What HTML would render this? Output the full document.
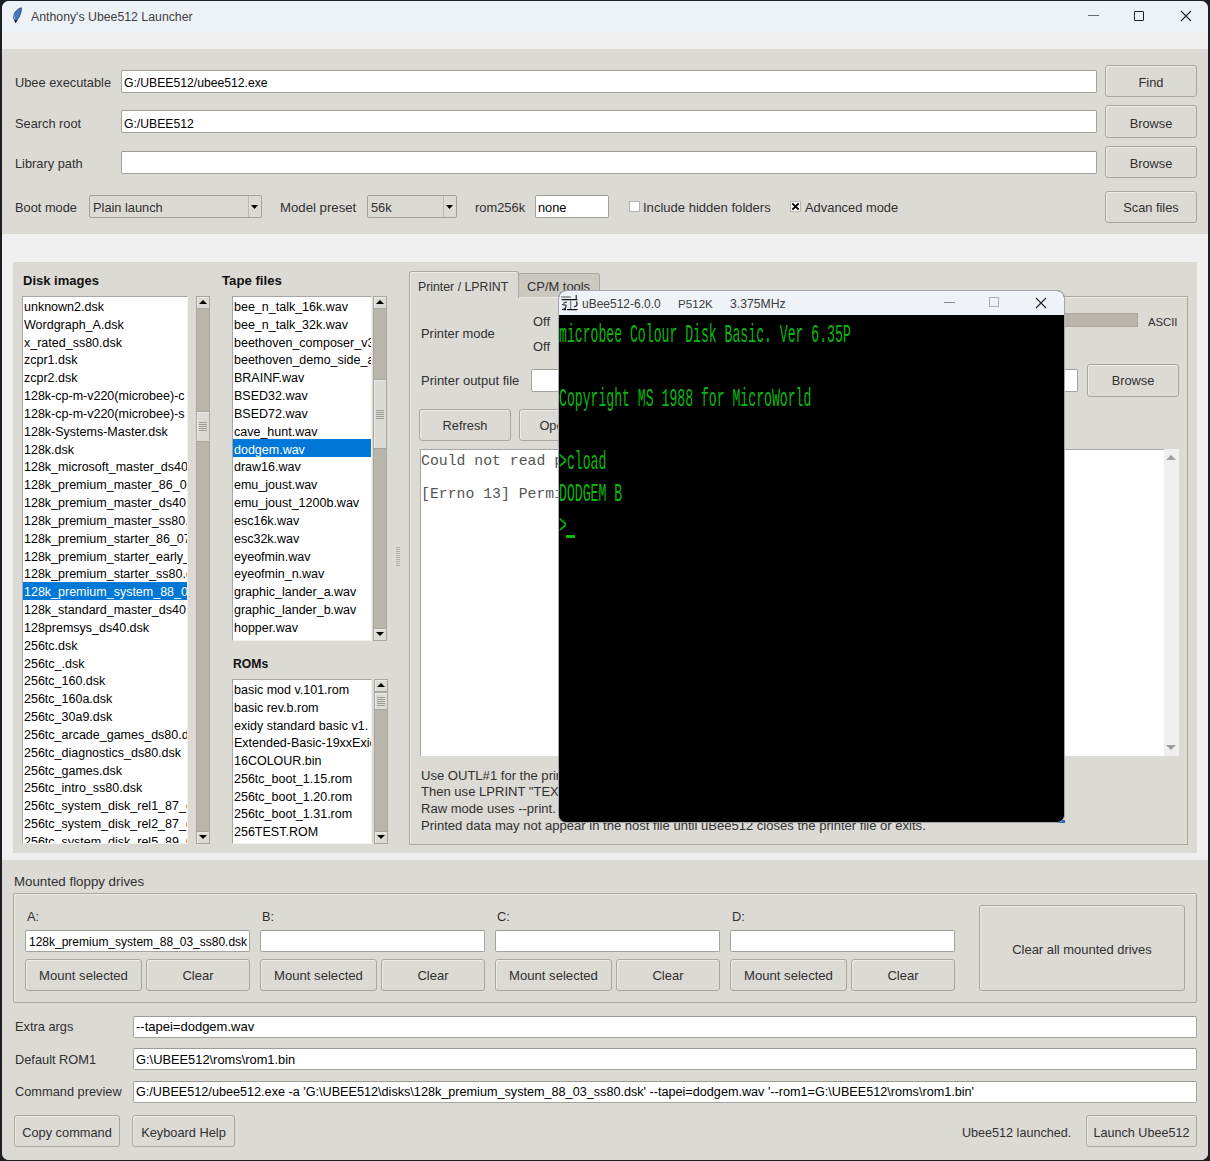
<!DOCTYPE html><html><head><meta charset="utf-8"><style>
html,body{margin:0;padding:0;}
body{width:1210px;height:1161px;overflow:hidden;background:#1e1f22;position:relative;font-family:"Liberation Sans",sans-serif;color:#303030;}
.a{position:absolute;}
.t{position:absolute;line-height:1;white-space:pre;}
</style></head><body>
<div class="a" style="left:2px;top:1px;width:1206px;height:1159px;background:#dcdad5;border-radius:7px;"></div>
<div class="a" style="left:2px;top:1px;width:1206px;height:31px;background:#edf2f7;border-radius:7px 7px 0 0;"></div>
<div class="a" style="left:2px;top:32px;width:1206px;height:17px;background:#f0f0f0;"></div>
<div class="a" style="left:2px;top:49px;width:1206px;height:185px;background:#dcdad5;"></div>
<div class="a" style="left:2px;top:234px;width:1206px;height:626px;background:#f0f0f0;"></div>
<div class="a" style="left:13px;top:262px;width:1184px;height:591px;background:#dcdad5;"></div>
<div class="a" style="left:2px;top:860px;width:1206px;height:300px;background:#dcdad5;border-radius:0 0 7px 7px;"></div>
<svg class="a" style="left:12px;top:6px" width="12" height="18" viewBox="0 0 12 18"><path d="M9.3 1.8 C 6 2.3, 1.6 6.5, 1.4 11.5 L 3.6 16.8 L 5.2 14 C 7.6 10.8, 9.8 6, 9.3 1.8 Z" fill="#4a78bd" stroke="#1e3a6e" stroke-width="0.8"/><path d="M1.8 8 C 1.6 10, 1.8 12, 3.2 14" stroke="#8fa6c8" stroke-width="1.2" fill="none"/><path d="M2.5 13.5 L 3.6 16.8 L 5 14.2 Z" fill="#111"/></svg>
<div class="t" style="left:31px;top:11px;font-size:12.3px;color:#404040;">Anthony's Ubee512 Launcher</div>
<div class="a" style="left:1088px;top:15px;width:11px;height:1px;background:#6a6a6a;"></div>
<div class="a" style="left:1134px;top:11px;width:10px;height:10px;border:1px solid #222;box-sizing:border-box;border-radius:1px;"></div>
<svg class="a" style="left:1180px;top:10px" width="12" height="12" viewBox="0 0 12 12"><path d="M1 1 L11 11 M11 1 L1 11" stroke="#222" stroke-width="1.1"/></svg>
<div class="t" style="left:15px;top:77px;font-size:12.8px;">Ubee executable</div>
<div class="a" style="left:121px;top:70px;width:976px;height:23px;background:#fff;border:1px solid #a4a29c;border-top-color:#9c9a94;border-radius:2px;box-sizing:border-box;"></div>
<div class="t" style="left:124px;top:77px;font-size:12.2px;color:#000;">G:/UBEE512/ubee512.exe</div>
<div class="a" style="left:1105px;top:65px;width:92px;height:32px;background:#dcdad5;border:1px solid #a9a69f;border-radius:3px;box-sizing:border-box;box-shadow:inset 1px 1px 0 #eeebe7;"></div>
<div class="t" style="left:1105px;width:92px;text-align:center;top:77px;font-size:12.8px;">Find</div>
<div class="t" style="left:15px;top:118px;font-size:12.8px;">Search root</div>
<div class="a" style="left:121px;top:110px;width:976px;height:23px;background:#fff;border:1px solid #a4a29c;border-top-color:#9c9a94;border-radius:2px;box-sizing:border-box;"></div>
<div class="t" style="left:124px;top:118px;font-size:12.2px;color:#000;">G:/UBEE512</div>
<div class="a" style="left:1105px;top:105px;width:92px;height:33px;background:#dcdad5;border:1px solid #a9a69f;border-radius:3px;box-sizing:border-box;box-shadow:inset 1px 1px 0 #eeebe7;"></div>
<div class="t" style="left:1105px;width:92px;text-align:center;top:118px;font-size:12.8px;">Browse</div>
<div class="t" style="left:15px;top:158px;font-size:12.8px;">Library path</div>
<div class="a" style="left:121px;top:151px;width:976px;height:23px;background:#fff;border:1px solid #a4a29c;border-top-color:#9c9a94;border-radius:2px;box-sizing:border-box;"></div>
<div class="a" style="left:1105px;top:146px;width:92px;height:32px;background:#dcdad5;border:1px solid #a9a69f;border-radius:3px;box-sizing:border-box;box-shadow:inset 1px 1px 0 #eeebe7;"></div>
<div class="t" style="left:1105px;width:92px;text-align:center;top:158px;font-size:12.8px;">Browse</div>
<div class="t" style="left:15px;top:202px;font-size:12.8px;">Boot mode</div>
<div class="a" style="left:89px;top:195px;width:173px;height:23px;background:#dcdad5;border:1px solid #a4a29c;border-radius:2px;box-sizing:border-box;"></div>
<div class="a" style="left:248px;top:196px;width:1px;height:21px;background:#bcb9b1;"></div>
<svg class="a" style="left:251px;top:205px" width="7" height="4" viewBox="0 0 7 4"><polygon points="0,0 7,0 3.5,4" fill="#000"/></svg>
<div class="t" style="left:93px;top:202px;font-size:12.8px;">Plain launch</div>
<div class="t" style="left:280px;top:201px;font-size:13.2px;">Model preset</div>
<div class="a" style="left:367px;top:195px;width:90px;height:23px;background:#dcdad5;border:1px solid #a4a29c;border-radius:2px;box-sizing:border-box;"></div>
<div class="a" style="left:443px;top:196px;width:1px;height:21px;background:#bcb9b1;"></div>
<svg class="a" style="left:446px;top:205px" width="7" height="4" viewBox="0 0 7 4"><polygon points="0,0 7,0 3.5,4" fill="#000"/></svg>
<div class="t" style="left:371px;top:202px;font-size:12.8px;">56k</div>
<div class="t" style="left:475px;top:202px;font-size:12.9px;">rom256k</div>
<div class="a" style="left:535px;top:195px;width:74px;height:23px;background:#fff;border:1px solid #a4a29c;border-top-color:#9c9a94;border-radius:2px;box-sizing:border-box;"></div>
<div class="t" style="left:538px;top:202px;font-size:12.8px;color:#000;">none</div>
<div class="a" style="left:629px;top:201px;width:11px;height:11px;background:#fff;border:1px solid #b3b3b3;box-sizing:border-box;"></div>
<div class="t" style="left:643px;top:201px;font-size:13.05px;">Include hidden folders</div>
<div class="a" style="left:790px;top:201px;width:11px;height:11px;background:#fff;border:1px solid #b3b3b3;box-sizing:border-box;"></div>
<svg class="a" style="left:790px;top:201px" width="11" height="11" viewBox="0 0 11 11"><path d="M2.3 2.3 L8.7 8.7 M8.7 2.3 L2.3 8.7" stroke="#000" stroke-width="1.9"/></svg>
<div class="t" style="left:805px;top:202px;font-size:12.9px;">Advanced mode</div>
<div class="a" style="left:1105px;top:191px;width:92px;height:32px;background:#dcdad5;border:1px solid #a9a69f;border-radius:3px;box-sizing:border-box;box-shadow:inset 1px 1px 0 #eeebe7;"></div>
<div class="t" style="left:1105px;width:92px;text-align:center;top:202px;font-size:12.8px;">Scan files</div>
<div class="t" style="left:23px;top:274px;font-size:13px;font-weight:bold;color:#111;">Disk images</div>
<div class="a" style="left:22px;top:296px;width:166px;height:548px;background:#fff;border:1px solid #f2f1ee;border-top-color:#a6a6a6;border-left-color:#a6a6a6;box-sizing:border-box;overflow:hidden;">
<div class="a" style="left:0;top:285px;width:164px;height:18px;background:#0078d7;"></div>
<div class="t" style="left:1px;top:4px;font-size:12.5px;color:#000;">unknown2.dsk</div>
<div class="t" style="left:1px;top:22px;font-size:12.5px;color:#000;">Wordgraph_A.dsk</div>
<div class="t" style="left:1px;top:40px;font-size:12.5px;color:#000;">x_rated_ss80.dsk</div>
<div class="t" style="left:1px;top:57px;font-size:12.5px;color:#000;">zcpr1.dsk</div>
<div class="t" style="left:1px;top:75px;font-size:12.5px;color:#000;">zcpr2.dsk</div>
<div class="t" style="left:1px;top:93px;font-size:12.5px;color:#000;">128k-cp-m-v220(microbee)-c</div>
<div class="t" style="left:1px;top:111px;font-size:12.5px;color:#000;">128k-cp-m-v220(microbee)-s</div>
<div class="t" style="left:1px;top:129px;font-size:12.5px;color:#000;">128k-Systems-Master.dsk</div>
<div class="t" style="left:1px;top:147px;font-size:12.5px;color:#000;">128k.dsk</div>
<div class="t" style="left:1px;top:164px;font-size:12.5px;color:#000;">128k_microsoft_master_ds40</div>
<div class="t" style="left:1px;top:182px;font-size:12.5px;color:#000;">128k_premium_master_86_07</div>
<div class="t" style="left:1px;top:200px;font-size:12.5px;color:#000;">128k_premium_master_ds40.</div>
<div class="t" style="left:1px;top:218px;font-size:12.5px;color:#000;">128k_premium_master_ss80.d</div>
<div class="t" style="left:1px;top:236px;font-size:12.5px;color:#000;">128k_premium_starter_86_07</div>
<div class="t" style="left:1px;top:254px;font-size:12.5px;color:#000;">128k_premium_starter_early_</div>
<div class="t" style="left:1px;top:271px;font-size:12.5px;color:#000;">128k_premium_starter_ss80.d</div>
<div class="t" style="left:1px;top:289px;font-size:12.5px;color:#fff;">128k_premium_system_88_03</div>
<div class="t" style="left:1px;top:307px;font-size:12.5px;color:#000;">128k_standard_master_ds40.</div>
<div class="t" style="left:1px;top:325px;font-size:12.5px;color:#000;">128premsys_ds40.dsk</div>
<div class="t" style="left:1px;top:343px;font-size:12.5px;color:#000;">256tc.dsk</div>
<div class="t" style="left:1px;top:361px;font-size:12.5px;color:#000;">256tc_.dsk</div>
<div class="t" style="left:1px;top:378px;font-size:12.5px;color:#000;">256tc_160.dsk</div>
<div class="t" style="left:1px;top:396px;font-size:12.5px;color:#000;">256tc_160a.dsk</div>
<div class="t" style="left:1px;top:414px;font-size:12.5px;color:#000;">256tc_30a9.dsk</div>
<div class="t" style="left:1px;top:432px;font-size:12.5px;color:#000;">256tc_arcade_games_ds80.d</div>
<div class="t" style="left:1px;top:450px;font-size:12.5px;color:#000;">256tc_diagnostics_ds80.dsk</div>
<div class="t" style="left:1px;top:468px;font-size:12.5px;color:#000;">256tc_games.dsk</div>
<div class="t" style="left:1px;top:485px;font-size:12.5px;color:#000;">256tc_intro_ss80.dsk</div>
<div class="t" style="left:1px;top:503px;font-size:12.5px;color:#000;">256tc_system_disk_rel1_87_ds</div>
<div class="t" style="left:1px;top:521px;font-size:12.5px;color:#000;">256tc_system_disk_rel2_87_ds</div>
<div class="t" style="left:1px;top:539px;font-size:12.5px;color:#000;">256tc_system_disk_rel5_89_0</div>
</div>
<div class="a" style="left:196px;top:296px;width:14px;height:548px;background:#bab5ab;border:1px solid #aaa69d;box-sizing:border-box;"></div>
<div class="a" style="left:196px;top:296px;width:14px;height:13px;background:#dcdad5;border:1px solid #aaa69d;box-sizing:border-box;box-shadow:inset 1px 1px 0 #eeebe7;"></div>
<div class="a" style="left:196px;top:831px;width:14px;height:13px;background:#dcdad5;border:1px solid #aaa69d;box-sizing:border-box;box-shadow:inset 1px 1px 0 #eeebe7;"></div>
<div class="a" style="left:199px;top:300px;width:0;height:0;border-left:4px solid transparent;border-right:4px solid transparent;border-bottom:4px solid #000;"></div>
<div class="a" style="left:199px;top:835px;width:0;height:0;border-left:4px solid transparent;border-right:4px solid transparent;border-top:4px solid #000;"></div>
<div class="a" style="left:196px;top:411px;width:14px;height:31px;background:#dcdad5;border:1px solid #aaa69d;box-sizing:border-box;box-shadow:inset 1px 1px 0 #eeebe7;"></div>
<div class="a" style="left:199px;top:422px;width:8px;height:1px;background:#a19d94;"></div>
<div class="a" style="left:199px;top:424px;width:8px;height:1px;background:#a19d94;"></div>
<div class="a" style="left:199px;top:426px;width:8px;height:1px;background:#a19d94;"></div>
<div class="a" style="left:199px;top:428px;width:8px;height:1px;background:#a19d94;"></div>
<div class="a" style="left:199px;top:430px;width:8px;height:1px;background:#a19d94;"></div>
<div class="t" style="left:222px;top:274px;font-size:13.2px;font-weight:bold;color:#111;">Tape files</div>
<div class="a" style="left:232px;top:296px;width:140px;height:345px;background:#fff;border:1px solid #f2f1ee;border-top-color:#a6a6a6;border-left-color:#a6a6a6;box-sizing:border-box;overflow:hidden;">
<div class="a" style="left:0;top:142px;width:138px;height:18px;background:#0078d7;"></div>
<div class="t" style="left:1px;top:4px;font-size:12.5px;color:#000;">bee_n_talk_16k.wav</div>
<div class="t" style="left:1px;top:22px;font-size:12.5px;color:#000;">bee_n_talk_32k.wav</div>
<div class="t" style="left:1px;top:40px;font-size:12.5px;color:#000;">beethoven_composer_v3</div>
<div class="t" style="left:1px;top:57px;font-size:12.5px;color:#000;">beethoven_demo_side_a</div>
<div class="t" style="left:1px;top:75px;font-size:12.5px;color:#000;">BRAINF.wav</div>
<div class="t" style="left:1px;top:93px;font-size:12.5px;color:#000;">BSED32.wav</div>
<div class="t" style="left:1px;top:111px;font-size:12.5px;color:#000;">BSED72.wav</div>
<div class="t" style="left:1px;top:129px;font-size:12.5px;color:#000;">cave_hunt.wav</div>
<div class="t" style="left:1px;top:147px;font-size:12.5px;color:#fff;">dodgem.wav</div>
<div class="t" style="left:1px;top:164px;font-size:12.5px;color:#000;">draw16.wav</div>
<div class="t" style="left:1px;top:182px;font-size:12.5px;color:#000;">emu_joust.wav</div>
<div class="t" style="left:1px;top:200px;font-size:12.5px;color:#000;">emu_joust_1200b.wav</div>
<div class="t" style="left:1px;top:218px;font-size:12.5px;color:#000;">esc16k.wav</div>
<div class="t" style="left:1px;top:236px;font-size:12.5px;color:#000;">esc32k.wav</div>
<div class="t" style="left:1px;top:254px;font-size:12.5px;color:#000;">eyeofmin.wav</div>
<div class="t" style="left:1px;top:271px;font-size:12.5px;color:#000;">eyeofmin_n.wav</div>
<div class="t" style="left:1px;top:289px;font-size:12.5px;color:#000;">graphic_lander_a.wav</div>
<div class="t" style="left:1px;top:307px;font-size:12.5px;color:#000;">graphic_lander_b.wav</div>
<div class="t" style="left:1px;top:325px;font-size:12.5px;color:#000;">hopper.wav</div>
</div>
<div class="a" style="left:373px;top:296px;width:14px;height:345px;background:#bab5ab;border:1px solid #aaa69d;box-sizing:border-box;"></div>
<div class="a" style="left:373px;top:296px;width:14px;height:13px;background:#dcdad5;border:1px solid #aaa69d;box-sizing:border-box;box-shadow:inset 1px 1px 0 #eeebe7;"></div>
<div class="a" style="left:373px;top:628px;width:14px;height:13px;background:#dcdad5;border:1px solid #aaa69d;box-sizing:border-box;box-shadow:inset 1px 1px 0 #eeebe7;"></div>
<div class="a" style="left:376px;top:300px;width:0;height:0;border-left:4px solid transparent;border-right:4px solid transparent;border-bottom:4px solid #000;"></div>
<div class="a" style="left:376px;top:632px;width:0;height:0;border-left:4px solid transparent;border-right:4px solid transparent;border-top:4px solid #000;"></div>
<div class="a" style="left:373px;top:379px;width:14px;height:70px;background:#dcdad5;border:1px solid #aaa69d;box-sizing:border-box;box-shadow:inset 1px 1px 0 #eeebe7;"></div>
<div class="a" style="left:376px;top:410px;width:8px;height:1px;background:#a19d94;"></div>
<div class="a" style="left:376px;top:412px;width:8px;height:1px;background:#a19d94;"></div>
<div class="a" style="left:376px;top:414px;width:8px;height:1px;background:#a19d94;"></div>
<div class="a" style="left:376px;top:416px;width:8px;height:1px;background:#a19d94;"></div>
<div class="a" style="left:376px;top:418px;width:8px;height:1px;background:#a19d94;"></div>
<div class="t" style="left:233px;top:658px;font-size:12.2px;font-weight:bold;color:#111;">ROMs</div>
<div class="a" style="left:232px;top:679px;width:140px;height:165px;background:#fff;border:1px solid #f2f1ee;border-top-color:#a6a6a6;border-left-color:#a6a6a6;box-sizing:border-box;overflow:hidden;">
<div class="t" style="left:1px;top:4px;font-size:12.5px;color:#000;">basic mod v.101.rom</div>
<div class="t" style="left:1px;top:22px;font-size:12.5px;color:#000;">basic rev.b.rom</div>
<div class="t" style="left:1px;top:40px;font-size:12.5px;color:#000;">exidy standard basic v1.</div>
<div class="t" style="left:1px;top:57px;font-size:12.5px;color:#000;">Extended-Basic-19xxExic</div>
<div class="t" style="left:1px;top:75px;font-size:12.5px;color:#000;">16COLOUR.bin</div>
<div class="t" style="left:1px;top:93px;font-size:12.5px;color:#000;">256tc_boot_1.15.rom</div>
<div class="t" style="left:1px;top:111px;font-size:12.5px;color:#000;">256tc_boot_1.20.rom</div>
<div class="t" style="left:1px;top:128px;font-size:12.5px;color:#000;">256tc_boot_1.31.rom</div>
<div class="t" style="left:1px;top:146px;font-size:12.5px;color:#000;">256TEST.ROM</div>
</div>
<div class="a" style="left:374px;top:679px;width:14px;height:165px;background:#bab5ab;border:1px solid #aaa69d;box-sizing:border-box;"></div>
<div class="a" style="left:374px;top:679px;width:14px;height:13px;background:#dcdad5;border:1px solid #aaa69d;box-sizing:border-box;box-shadow:inset 1px 1px 0 #eeebe7;"></div>
<div class="a" style="left:374px;top:831px;width:14px;height:13px;background:#dcdad5;border:1px solid #aaa69d;box-sizing:border-box;box-shadow:inset 1px 1px 0 #eeebe7;"></div>
<div class="a" style="left:377px;top:683px;width:0;height:0;border-left:4px solid transparent;border-right:4px solid transparent;border-bottom:4px solid #000;"></div>
<div class="a" style="left:377px;top:835px;width:0;height:0;border-left:4px solid transparent;border-right:4px solid transparent;border-top:4px solid #000;"></div>
<div class="a" style="left:374px;top:692px;width:14px;height:18px;background:#dcdad5;border:1px solid #aaa69d;box-sizing:border-box;box-shadow:inset 1px 1px 0 #eeebe7;"></div>
<div class="a" style="left:377px;top:697px;width:8px;height:1px;background:#a19d94;"></div>
<div class="a" style="left:377px;top:699px;width:8px;height:1px;background:#a19d94;"></div>
<div class="a" style="left:377px;top:701px;width:8px;height:1px;background:#a19d94;"></div>
<div class="a" style="left:377px;top:703px;width:8px;height:1px;background:#a19d94;"></div>
<div class="a" style="left:377px;top:705px;width:8px;height:1px;background:#a19d94;"></div>
<div class="a" style="left:396px;top:547px;width:4px;height:1px;background:#b3b0a9;"></div>
<div class="a" style="left:396px;top:549px;width:4px;height:1px;background:#b3b0a9;"></div>
<div class="a" style="left:396px;top:551px;width:4px;height:1px;background:#b3b0a9;"></div>
<div class="a" style="left:396px;top:553px;width:4px;height:1px;background:#b3b0a9;"></div>
<div class="a" style="left:396px;top:555px;width:4px;height:1px;background:#b3b0a9;"></div>
<div class="a" style="left:396px;top:557px;width:4px;height:1px;background:#b3b0a9;"></div>
<div class="a" style="left:396px;top:559px;width:4px;height:1px;background:#b3b0a9;"></div>
<div class="a" style="left:396px;top:561px;width:4px;height:1px;background:#b3b0a9;"></div>
<div class="a" style="left:396px;top:563px;width:4px;height:1px;background:#b3b0a9;"></div>
<div class="a" style="left:396px;top:565px;width:4px;height:1px;background:#b3b0a9;"></div>
<div class="a" style="left:409px;top:296px;width:779px;height:549px;border:1px solid #aaa79f;box-sizing:border-box;box-shadow:inset 1px 1px 0 #eeebe7;"></div>
<div class="a" style="left:518px;top:273px;width:82px;height:24px;background:#cbc8c0;border:1px solid #aaa79f;border-bottom:none;border-radius:3px 3px 0 0;box-sizing:border-box;"></div>
<div class="a" style="left:409px;top:271px;width:110px;height:27px;background:#dcdad5;border:1px solid #aaa79f;border-bottom:none;border-radius:3px 3px 0 0;box-sizing:border-box;box-shadow:inset 1px 1px 0 #eeebe7;"></div>
<div class="t" style="left:418px;top:281px;font-size:12.3px;">Printer / LPRINT</div>
<div class="t" style="left:527px;top:281px;font-size:12.9px;">CP/M tools</div>
<div class="t" style="left:421px;top:328px;font-size:12.9px;">Printer mode</div>
<div class="t" style="left:533px;top:316px;font-size:12.9px;">Off</div>
<div class="t" style="left:533px;top:341px;font-size:12.9px;">Off</div>
<div class="a" style="left:900px;top:313px;width:238px;height:14px;background:#bab5ab;border:1px solid #aaa69d;box-sizing:border-box;"></div>
<div class="t" style="left:1148px;top:317px;font-size:11.3px;">ASCII</div>
<div class="t" style="left:421px;top:374px;font-size:13px;">Printer output file</div>
<div class="a" style="left:531px;top:369px;width:547px;height:23px;background:#fff;border:1px solid #a4a29c;border-top-color:#9c9a94;border-radius:2px;box-sizing:border-box;"></div>
<div class="a" style="left:1087px;top:364px;width:92px;height:33px;background:#dcdad5;border:1px solid #a9a69f;border-radius:3px;box-sizing:border-box;box-shadow:inset 1px 1px 0 #eeebe7;"></div>
<div class="t" style="left:1087px;width:92px;text-align:center;top:375px;font-size:12.8px;">Browse</div>
<div class="a" style="left:419px;top:409px;width:92px;height:32px;background:#dcdad5;border:1px solid #a9a69f;border-radius:3px;box-sizing:border-box;box-shadow:inset 1px 1px 0 #eeebe7;"></div>
<div class="t" style="left:419px;width:92px;text-align:center;top:420px;font-size:12.8px;">Refresh</div>
<div class="a" style="left:519px;top:409px;width:92px;height:32px;background:#dcdad5;border:1px solid #a9a69f;border-radius:3px;box-sizing:border-box;box-shadow:inset 1px 1px 0 #eeebe7;"></div>
<div class="t" style="left:519px;width:92px;text-align:center;top:420px;font-size:12.8px;">Open file</div>
<div class="a" style="left:420px;top:449px;width:744px;height:307px;background:#fff;border-top:1px solid #a6a6a6;border-left:1px solid #a6a6a6;box-sizing:border-box;"></div>
<div class="a" style="left:1164px;top:449px;width:15px;height:307px;background:#f0f0f0;"></div>
<div class="a" style="left:1166px;top:455px;width:0;height:0;border-left:5px solid transparent;border-right:5px solid transparent;border-bottom:5px solid #a0a0a0;"></div>
<div class="a" style="left:1166px;top:745px;width:0;height:0;border-left:5px solid transparent;border-right:5px solid transparent;border-top:5px solid #a0a0a0;"></div>
<div class="t" style="left:421px;top:454px;font-size:14.8px;font-family:'Liberation Mono',monospace;color:#555;">Could not read printer file</div>
<div class="t" style="left:421px;top:487px;font-size:14.8px;font-family:'Liberation Mono',monospace;color:#555;">[Errno 13] Permission denied</div>
<div class="t" style="left:421px;top:769px;font-size:13.05px;">Use OUTL#1 for the printer port.</div>
<div class="t" style="left:421px;top:785px;font-size:13.05px;">Then use LPRINT "TEXT" to print.</div>
<div class="t" style="left:421px;top:802px;font-size:13.05px;">Raw mode uses --print.</div>
<div class="t" style="left:421px;top:819px;font-size:13.05px;">Printed data may not appear in the host file until uBee512 closes the printer file or exits.</div>
<div class="a" style="left:1020px;top:820px;width:45px;height:3px;background:#1f6fc9;"></div>
<div class="a" style="left:558px;top:290px;width:507px;height:533px;background:#000;border:1px solid #a3a7ad;border-radius:8px;box-sizing:border-box;overflow:hidden;"></div>
<div class="a" style="left:559px;top:291px;width:505px;height:24px;background:#eff3f8;border-radius:7px 7px 0 0;"></div>
<svg class="a" style="left:560px;top:294px" width="19" height="18" viewBox="0 0 19 18"><g fill="none" stroke-linecap="round"><path d="M1.8 3 H 10" stroke="#a0a0a0" stroke-width="2"/><path d="M16.2 1.5 V 4.3" stroke="#222" stroke-width="1.2"/><path d="M2 5.6 H 17" stroke="#111" stroke-width="1.4"/><path d="M3.8 9 L 6.3 8.2 M 2.6 10.6 L 6 11.2 C 6.2 13.6, 4.8 15.3, 2.6 15.5" stroke="#333" stroke-width="1.3"/><path d="M10.6 7 V 15" stroke="#888" stroke-width="1.5"/><path d="M16.6 8 C 17.6 10.2, 17.2 12, 14.6 12.6" stroke="#222" stroke-width="1.3"/><path d="M7.5 15.6 H 17" stroke="#111" stroke-width="1.4"/></g><circle cx="5" cy="15.6" r="1" fill="#000"/></svg>
<div class="t" style="left:582px;top:298px;font-size:12px;color:#3a3a3a;">uBee512-6.0.0</div>
<div class="t" style="left:678px;top:298px;font-size:11.6px;color:#3a3a3a;">P512K</div>
<div class="t" style="left:730px;top:298px;font-size:12.2px;color:#3a3a3a;">3.375MHz</div>
<div class="a" style="left:944px;top:302px;width:11px;height:1px;background:#8a8a8a;"></div>
<div class="a" style="left:989px;top:297px;width:10px;height:10px;border:1px solid #b0b0b0;box-sizing:border-box;"></div>
<svg class="a" style="left:1035px;top:297px" width="12" height="12" viewBox="0 0 12 12"><path d="M1 1 L11 11 M11 1 L1 11" stroke="#222" stroke-width="1.1"/></svg>
<div class="t" style="left:559px;top:332px;font-family:'Liberation Mono',monospace;font-size:13.15px;color:#0cb80c;transform:scaleY(2.0);transform-origin:0 10px;">microbee Colour Disk Basic. Ver 6.35P</div>
<div class="t" style="left:559px;top:396px;font-family:'Liberation Mono',monospace;font-size:13.15px;color:#0cb80c;transform:scaleY(2.0);transform-origin:0 10px;">Copyright MS 1988 for MicroWorld</div>
<div class="t" style="left:559px;top:459px;font-family:'Liberation Mono',monospace;font-size:13.15px;color:#0cb80c;transform:scaleY(2.0);transform-origin:0 10px;">&gt;cload</div>
<div class="t" style="left:559px;top:491px;font-family:'Liberation Mono',monospace;font-size:13.15px;color:#0cb80c;transform:scaleY(2.0);transform-origin:0 10px;">DODGEM B</div>
<div class="t" style="left:559px;top:523px;font-family:'Liberation Mono',monospace;font-size:13.15px;color:#0cb80c;transform:scaleY(2.0);transform-origin:0 10px;">&gt;</div>
<div class="a" style="left:566px;top:535px;width:9px;height:3px;background:#0cb80c;"></div>
<div class="t" style="left:14px;top:875px;font-size:13.3px;">Mounted floppy drives</div>
<div class="a" style="left:13px;top:893px;width:1184px;height:110px;border:1px solid #aaa79f;border-radius:2px;box-sizing:border-box;box-shadow:inset 1px 1px 0 #eeebe7;"></div>
<div class="t" style="left:27px;top:911px;font-size:12.8px;">A:</div>
<div class="a" style="left:25px;top:930px;width:225px;height:22px;background:#fff;border:1px solid #a4a29c;border-top-color:#9c9a94;border-radius:2px;box-sizing:border-box;"></div>
<div class="a" style="left:25px;top:959px;width:117px;height:32px;background:#dcdad5;border:1px solid #a9a69f;border-radius:3px;box-sizing:border-box;box-shadow:inset 1px 1px 0 #eeebe7;"></div>
<div class="t" style="left:25px;width:117px;text-align:center;top:969px;font-size:13.1px;">Mount selected</div>
<div class="a" style="left:146px;top:959px;width:104px;height:32px;background:#dcdad5;border:1px solid #a9a69f;border-radius:3px;box-sizing:border-box;box-shadow:inset 1px 1px 0 #eeebe7;"></div>
<div class="t" style="left:146px;width:104px;text-align:center;top:969px;font-size:13px;">Clear</div>
<div class="t" style="left:262px;top:911px;font-size:12.8px;">B:</div>
<div class="a" style="left:260px;top:930px;width:225px;height:22px;background:#fff;border:1px solid #a4a29c;border-top-color:#9c9a94;border-radius:2px;box-sizing:border-box;"></div>
<div class="a" style="left:260px;top:959px;width:117px;height:32px;background:#dcdad5;border:1px solid #a9a69f;border-radius:3px;box-sizing:border-box;box-shadow:inset 1px 1px 0 #eeebe7;"></div>
<div class="t" style="left:260px;width:117px;text-align:center;top:969px;font-size:13.1px;">Mount selected</div>
<div class="a" style="left:381px;top:959px;width:104px;height:32px;background:#dcdad5;border:1px solid #a9a69f;border-radius:3px;box-sizing:border-box;box-shadow:inset 1px 1px 0 #eeebe7;"></div>
<div class="t" style="left:381px;width:104px;text-align:center;top:969px;font-size:13px;">Clear</div>
<div class="t" style="left:497px;top:911px;font-size:12.8px;">C:</div>
<div class="a" style="left:495px;top:930px;width:225px;height:22px;background:#fff;border:1px solid #a4a29c;border-top-color:#9c9a94;border-radius:2px;box-sizing:border-box;"></div>
<div class="a" style="left:495px;top:959px;width:117px;height:32px;background:#dcdad5;border:1px solid #a9a69f;border-radius:3px;box-sizing:border-box;box-shadow:inset 1px 1px 0 #eeebe7;"></div>
<div class="t" style="left:495px;width:117px;text-align:center;top:969px;font-size:13.1px;">Mount selected</div>
<div class="a" style="left:616px;top:959px;width:104px;height:32px;background:#dcdad5;border:1px solid #a9a69f;border-radius:3px;box-sizing:border-box;box-shadow:inset 1px 1px 0 #eeebe7;"></div>
<div class="t" style="left:616px;width:104px;text-align:center;top:969px;font-size:13px;">Clear</div>
<div class="t" style="left:732px;top:911px;font-size:12.8px;">D:</div>
<div class="a" style="left:730px;top:930px;width:225px;height:22px;background:#fff;border:1px solid #a4a29c;border-top-color:#9c9a94;border-radius:2px;box-sizing:border-box;"></div>
<div class="a" style="left:730px;top:959px;width:117px;height:32px;background:#dcdad5;border:1px solid #a9a69f;border-radius:3px;box-sizing:border-box;box-shadow:inset 1px 1px 0 #eeebe7;"></div>
<div class="t" style="left:730px;width:117px;text-align:center;top:969px;font-size:13.1px;">Mount selected</div>
<div class="a" style="left:851px;top:959px;width:104px;height:32px;background:#dcdad5;border:1px solid #a9a69f;border-radius:3px;box-sizing:border-box;box-shadow:inset 1px 1px 0 #eeebe7;"></div>
<div class="t" style="left:851px;width:104px;text-align:center;top:969px;font-size:13px;">Clear</div>
<div class="t" style="left:29px;top:936px;font-size:12px;color:#000;">128k_premium_system_88_03_ss80.dsk</div>
<div class="a" style="left:979px;top:905px;width:206px;height:86px;background:#dcdad5;border:1px solid #a9a69f;border-radius:3px;box-sizing:border-box;box-shadow:inset 1px 1px 0 #eeebe7;"></div>
<div class="t" style="left:979px;width:206px;text-align:center;top:944px;font-size:12.95px;">Clear all mounted drives</div>
<div class="t" style="left:15px;top:1021px;font-size:12.8px;">Extra args</div>
<div class="a" style="left:133px;top:1016px;width:1064px;height:22px;background:#fff;border:1px solid #a4a29c;border-top-color:#9c9a94;border-radius:2px;box-sizing:border-box;"></div>
<div class="t" style="left:136px;top:1020px;font-size:13px;color:#000;">--tapei=dodgem.wav</div>
<div class="t" style="left:15px;top:1054px;font-size:12.8px;">Default ROM1</div>
<div class="a" style="left:133px;top:1048px;width:1064px;height:22px;background:#fff;border:1px solid #a4a29c;border-top-color:#9c9a94;border-radius:2px;box-sizing:border-box;"></div>
<div class="t" style="left:136px;top:1054px;font-size:12.85px;color:#000;">G:\UBEE512\roms\rom1.bin</div>
<div class="t" style="left:15px;top:1086px;font-size:12.8px;">Command preview</div>
<div class="a" style="left:133px;top:1081px;width:1064px;height:22px;background:#fff;border:1px solid #a4a29c;border-top-color:#9c9a94;border-radius:2px;box-sizing:border-box;"></div>
<div class="t" style="left:136px;top:1086px;font-size:12.65px;color:#000;">G:/UBEE512/ubee512.exe -a 'G:\UBEE512\disks\128k_premium_system_88_03_ss80.dsk' --tapei=dodgem.wav '--rom1=G:\UBEE512\roms\rom1.bin'</div>
<div class="a" style="left:14px;top:1115px;width:106px;height:32px;background:#dcdad5;border:1px solid #a9a69f;border-radius:3px;box-sizing:border-box;box-shadow:inset 1px 1px 0 #eeebe7;"></div>
<div class="t" style="left:14px;width:106px;text-align:center;top:1127px;font-size:12.8px;">Copy command</div>
<div class="a" style="left:132px;top:1115px;width:103px;height:32px;background:#dcdad5;border:1px solid #a9a69f;border-radius:3px;box-sizing:border-box;box-shadow:inset 1px 1px 0 #eeebe7;"></div>
<div class="t" style="left:132px;width:103px;text-align:center;top:1127px;font-size:12.8px;">Keyboard Help</div>
<div class="t" style="left:962px;top:1127px;font-size:12.6px;">Ubee512 launched.</div>
<div class="a" style="left:1086px;top:1115px;width:111px;height:32px;background:#dcdad5;border:1px solid #a9a69f;border-radius:3px;box-sizing:border-box;box-shadow:inset 1px 1px 0 #eeebe7;"></div>
<div class="t" style="left:1086px;width:111px;text-align:center;top:1127px;font-size:12.6px;">Launch Ubee512</div>
</body></html>
